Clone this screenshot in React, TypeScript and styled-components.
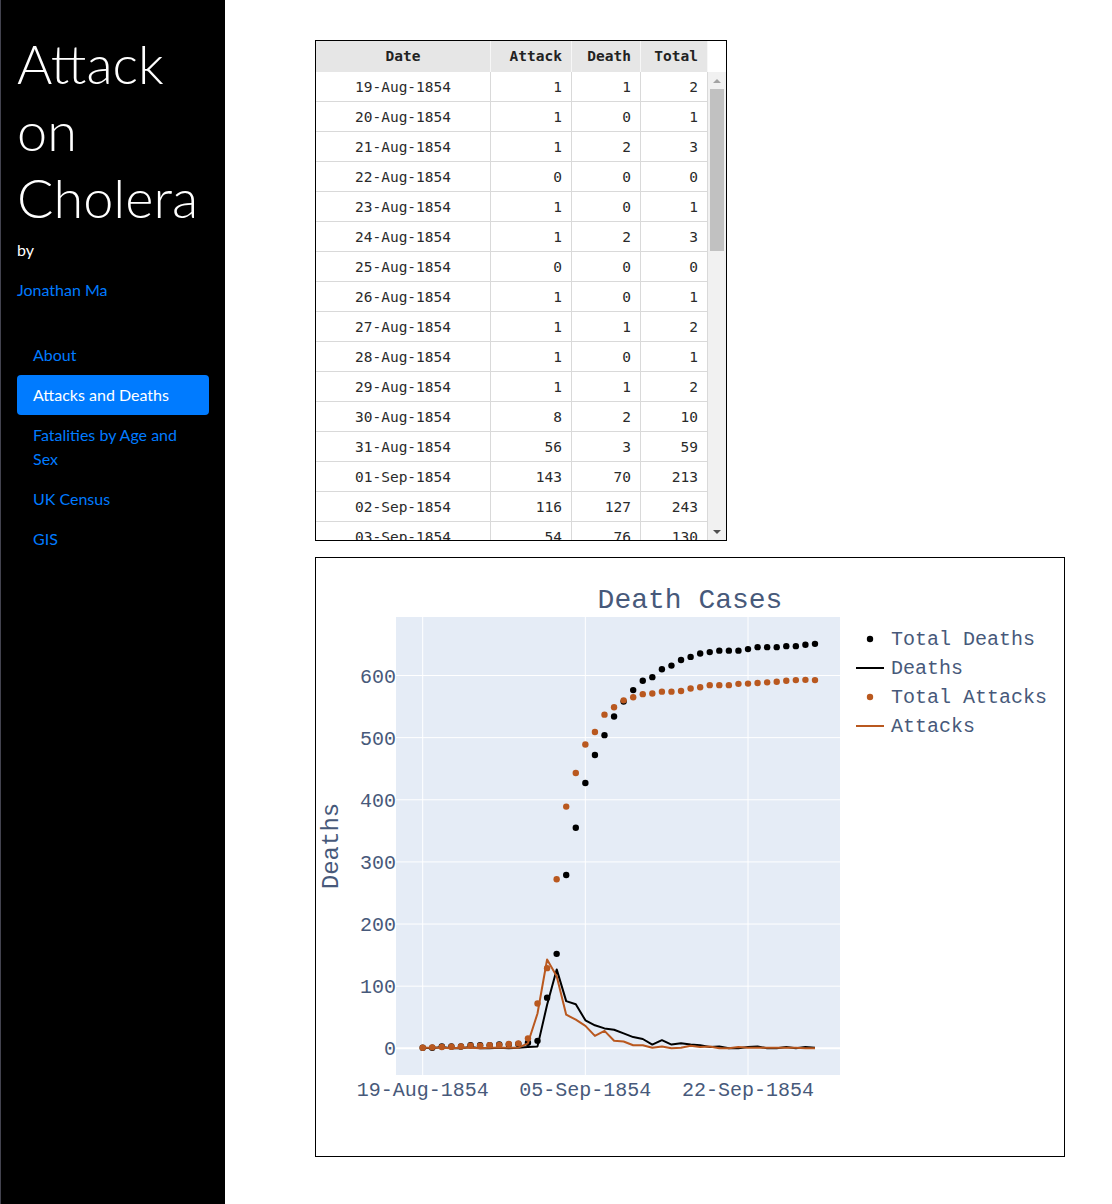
import React from "react";
import styled, { createGlobalStyle } from "styled-components";

const GlobalStyle = createGlobalStyle`
  html, body { margin: 0; padding: 0; background: #fff; }
  body { font-family: Lato, "Open Sans", sans-serif; font-size: 16px; line-height: 1.5; }
  * { box-sizing: border-box; }
`;

const deaths = [1,0,2,0,0,2,0,0,1,0,1,2,3,70,127,76,71,45,37,32,30,24,18,15,6,13,6,8,6,5,2,3,0,0,2,3,0,0,2,0,2,1];
const attacks = [1,1,1,0,1,1,0,1,1,1,1,8,56,143,116,54,46,36,20,28,12,11,5,5,1,3,0,1,4,2,3,0,0,2,1,1,1,1,1,1,0,0];
const totalDeaths = [1,1,3,3,3,5,5,5,6,6,7,9,12,81.5,152,279,355,427,472,504,534,558,576.5,591.5,597.4,610,616,625,630,635.5,637.7,640,640,640,642.5,645.7,645.7,645.7,647.3,647.3,649.5,651];
const totalAttacks = [1,1.5,2,2.5,3,4,4,5,5.5,7,8,16,72,129,272,389,443,489,509,537,549,560,565,570,571,574,574,575,579,581,584.5,584.5,584.5,586.6,587,588,589,590,591.5,592.6,593,592.6];

const months = ["Jan","Feb","Mar","Apr","May","Jun","Jul","Aug","Sep","Oct","Nov","Dec"];
const dateLabel = (i: number) => {
  const d = new Date(Date.UTC(1854, 7, 19 + i));
  const dd = String(d.getUTCDate()).padStart(2, "0");
  return `${dd}-${months[d.getUTCMonth()]}-1854`;
};

// Only the rows that the scroll viewport can show
const rows = deaths.slice(0, 16).map((dv, i) => ({
  date: dateLabel(i),
  attack: attacks[i],
  death: dv,
  total: attacks[i] + dv,
}));

/* ---------- layout ---------- */

const Page = styled.div`
  display: flex;
  min-height: 100vh;
`;

const Sidebar = styled.aside`
  width: 225px;
  flex: 0 0 225px;
  min-height: 1204px;
  background: #000;
  border-left: 1px solid #43434f;
  padding: 30px 16px 16px 16px;
  color: #fff;
`;

const Title = styled.h1`
  margin: 0 0 7px 0;
  font-family: Lato, "Open Sans", sans-serif;
  font-weight: 300;
  font-size: 54px;
  line-height: 67px;
  color: #fff;
`;

const Byline = styled.p`
  margin: 0 0 16px 0;
  font-size: 16px;
  line-height: 24px;
  color: #fff;
`;

const AuthorLink = styled.a`
  display: block;
  margin: 0 0 33px 0;
  font-size: 16px;
  line-height: 24px;
  color: #007bff;
  text-decoration: none;
`;

const Nav = styled.nav`
  display: flex;
  flex-direction: column;
`;

const NavLink = styled.a<{ $active?: boolean }>`
  display: block;
  padding: 8px 16px;
  font-size: 16px;
  line-height: 24px;
  border-radius: 4px;
  text-decoration: none;
  color: ${(p) => (p.$active ? "#fff" : "#007bff")};
  background: ${(p) => (p.$active ? "#007bff" : "transparent")};
`;

const Main = styled.main`
  flex: 1;
  padding: 40px 0 0 90px;
  display: flex;
  flex-direction: column;
  gap: 16px;
`;

/* ---------- table ---------- */

const TableBox = styled.div`
  width: 412px;
  border: 1px solid #000;
  background: #fff;
  font-family: "DejaVu Sans Mono", "Liberation Mono", monospace;
  font-size: 14.5px;
`;

const COLS = "175px 81px 69px 67px";

const HeaderRow = styled.div`
  display: grid;
  grid-template-columns: ${COLS};
  width: 392px;
  height: 31px;
  background: #e6e6e6;
`;

const HeadCell = styled.div<{ $center?: boolean }>`
  display: flex;
  align-items: center;
  justify-content: ${(p) => (p.$center ? "center" : "flex-end")};
  padding: 0 9px 0 9px;
  font-weight: bold;
  color: #222;
  border-right: 1px solid #f7f7f7;
`;

const BodyWrap = styled.div`
  display: flex;
  height: 468px;
`;

const Viewport = styled.div`
  width: 392px;
  height: 468px;
  overflow: hidden;
`;

const Row = styled.div`
  display: grid;
  grid-template-columns: ${COLS};
  height: 30px;
  border-bottom: 1px solid #d9d9d9;
`;

const Cell = styled.div<{ $center?: boolean }>`
  display: flex;
  align-items: center;
  justify-content: ${(p) => (p.$center ? "center" : "flex-end")};
  padding: 2px 9px 0 9px;
  color: #2a2a2a;
  border-right: 1px solid #d9d9d9;
`;

const Scrollbar = styled.div`
  width: 18px;
  display: flex;
  flex-direction: column;
  background: #f1f1f1;
`;

const ScrollButton = styled.div<{ $down?: boolean }>`
  height: 17px;
  display: flex;
  align-items: center;
  justify-content: center;
  &::after {
    content: "";
    width: 0;
    height: 0;
    border-left: 4px solid transparent;
    border-right: 4px solid transparent;
    ${(p) => (p.$down ? "border-top: 4px solid #505050;" : "border-bottom: 4px solid #a3a3a3;")}
  }
`;

const ScrollTrack = styled.div`
  flex: 1;
  padding: 0 2px;
  display: flex;
  flex-direction: column;
`;

const ScrollThumb = styled.div`
  height: 162px;
  background: #c1c1c1;
`;

/* ---------- chart ---------- */

const ChartBox = styled.div`
  width: 750px;
  height: 600px;
  border: 1px solid #000;
  background: #fff;
`;

const ChartSvg = styled.svg`
  display: block;
  font-family: "Liberation Mono", "Courier New", monospace;
`;

const PX0 = 80, PX1 = 524, PY0 = 59, PY1 = 517;
const xOf = (d: number) => 106.7 + 9.568 * d;
const yOf = (v: number) => 490.3 - 0.6213 * v;
const TXT = "#47597a";
const ORANGE = "#b9581f";

const linePath = (arr: number[]) =>
  arr.map((v, i) => `${i === 0 ? "M" : "L"}${xOf(i).toFixed(1)},${yOf(v).toFixed(1)}`).join(" ");

function Chart() {
  const yTicks = [0, 100, 200, 300, 400, 500, 600];
  const xTicks = [
    { d: 0, l: "19-Aug-1854" },
    { d: 17, l: "05-Sep-1854" },
    { d: 34, l: "22-Sep-1854" },
  ];
  return (
    <ChartSvg width={748} height={598} viewBox="0 0 748 598">
      <rect x={PX0} y={PY0} width={PX1 - PX0} height={PY1 - PY0} fill="#e5ecf6" />
      {xTicks.map((t) => (
        <line key={t.l} x1={xOf(t.d)} x2={xOf(t.d)} y1={PY0} y2={PY1} stroke="#fff" strokeWidth={1} />
      ))}
      {yTicks.map((v) => (
        <line key={v} x1={PX0} x2={PX1} y1={yOf(v)} y2={yOf(v)} stroke="#fff" strokeWidth={v === 0 ? 2 : 1} />
      ))}
      <g>
        {totalDeaths.map((v, i) => (
          <circle key={i} cx={xOf(i)} cy={yOf(v)} r={3.2} fill="#000" />
        ))}
      </g>
      <path d={linePath(deaths)} fill="none" stroke="#000" strokeWidth={2} strokeLinejoin="round" />
      <g>
        {totalAttacks.map((v, i) => (
          <circle key={i} cx={xOf(i)} cy={yOf(v)} r={3.2} fill={ORANGE} />
        ))}
      </g>
      <path d={linePath(attacks)} fill="none" stroke={ORANGE} strokeWidth={2} strokeLinejoin="round" />

      {yTicks.map((v) => (
        <text key={v} x={80} y={yOf(v) + 7} textAnchor="end" fontSize={20} fill={TXT}>
          {v}
        </text>
      ))}
      {xTicks.map((t) => (
        <text key={t.l} x={xOf(t.d)} y={538} textAnchor="middle" fontSize={20} fill={TXT}>
          {t.l}
        </text>
      ))}
      <text x={374} y={50} textAnchor="middle" fontSize={28} fill={TXT}>
        Death Cases
      </text>
      <text
        x={22}
        y={288}
        textAnchor="middle"
        fontSize={24}
        fill={TXT}
        transform="rotate(-90 22 288)"
      >
        Deaths
      </text>

      <g>
        <circle cx={554} cy={81} r={3.2} fill="#000" />
        <text x={575} y={87} fontSize={20} fill={TXT}>Total Deaths</text>
        <line x1={540} x2={568} y1={110} y2={110} stroke="#000" strokeWidth={2} />
        <text x={575} y={116} fontSize={20} fill={TXT}>Deaths</text>
        <circle cx={554} cy={139} r={3.2} fill={ORANGE} />
        <text x={575} y={145} fontSize={20} fill={TXT}>Total Attacks</text>
        <line x1={540} x2={568} y1={168} y2={168} stroke={ORANGE} strokeWidth={2} />
        <text x={575} y={174} fontSize={20} fill={TXT}>Attacks</text>
      </g>
    </ChartSvg>
  );
}

const navItems = [
  { label: "About" },
  { label: "Attacks and Deaths", active: true },
  { label: "Fatalities by Age and Sex" },
  { label: "UK Census" },
  { label: "GIS" },
];

export default function App() {
  return (
    <>
      <GlobalStyle />
      <Page>
        <Sidebar>
          <Title>Attack on Cholera</Title>
          <Byline>by</Byline>
          <AuthorLink href="#">Jonathan Ma</AuthorLink>
          <Nav>
            {navItems.map((n) => (
              <NavLink key={n.label} href="#" $active={n.active}>
                {n.label}
              </NavLink>
            ))}
          </Nav>
        </Sidebar>
        <Main>
          <TableBox>
            <HeaderRow>
              <HeadCell $center>Date</HeadCell>
              <HeadCell>Attack</HeadCell>
              <HeadCell>Death</HeadCell>
              <HeadCell>Total</HeadCell>
            </HeaderRow>
            <BodyWrap>
              <Viewport>
                {rows.map((r) => (
                  <Row key={r.date}>
                    <Cell $center>{r.date}</Cell>
                    <Cell>{r.attack}</Cell>
                    <Cell>{r.death}</Cell>
                    <Cell>{r.total}</Cell>
                  </Row>
                ))}
              </Viewport>
              <Scrollbar>
                <ScrollButton />
                <ScrollTrack>
                  <ScrollThumb />
                </ScrollTrack>
                <ScrollButton $down />
              </Scrollbar>
            </BodyWrap>
          </TableBox>
          <ChartBox>
            <Chart />
          </ChartBox>
        </Main>
      </Page>
    </>
  );
}
